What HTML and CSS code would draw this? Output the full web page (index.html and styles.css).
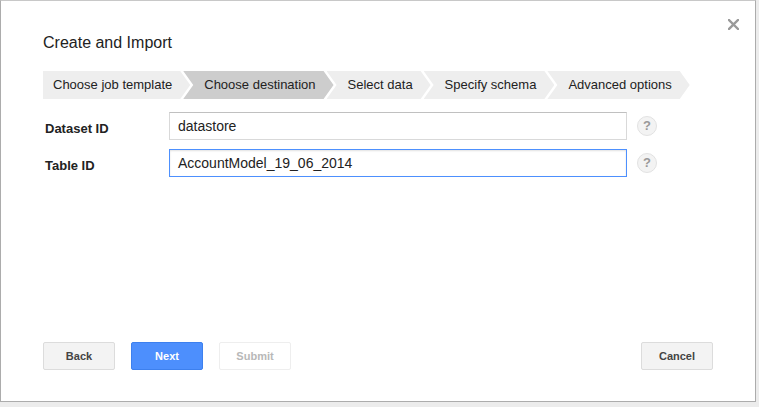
FILE: index.html
```html
<!DOCTYPE html>
<html lang="en">
<head>
<meta charset="utf-8">
<title>Create and Import</title>
<link rel="stylesheet" href="styles.css">
</head>
<body>
<div class="dialog">
  <button class="close" aria-label="Close">
    <svg width="11" height="11" viewBox="0 0 11 11"><path d="M1 1 L10 10 M10 1 L1 10" stroke="#9a9a9a" stroke-width="2.4" stroke-linecap="square" fill="none"/></svg>
  </button>
  <h1 class="title">Create and Import</h1>
  <div class="steps">
    <div class="step first">Choose job template</div>
    <div class="step active">Choose destination</div>
    <div class="step">Select data</div>
    <div class="step">Specify schema</div>
    <div class="step">Advanced options</div>
  </div>
  <div class="form">
    <div class="row">
      <div class="label">Dataset ID</div>
      <div class="input">datastore</div>
      <div class="help">?</div>
    </div>
    <div class="row">
      <div class="label">Table ID</div>
      <div class="input focused">AccountModel_19_06_2014</div>
      <div class="help">?</div>
    </div>
  </div>
  <div class="buttons">
    <button class="btn">Back</button>
    <button class="btn primary">Next</button>
    <button class="btn disabled">Submit</button>
    <button class="btn cancel">Cancel</button>
  </div>
</div>
</body>
</html>
```
FILE: styles.css
```css
html, body {
  margin: 0;
  padding: 0;
}
body {
  width: 759px;
  height: 407px;
  background: #ececec;
  font-family: "Liberation Sans", Arial, Helvetica, sans-serif;
  color: #222;
  overflow: hidden;
}
.dialog {
  position: relative;
  box-sizing: border-box;
  width: 756px;
  height: 402px;
  background: #fff;
  border: 1px solid #acacac;
  border-top-color: #c8c8c8;
  padding: 32px 42px 31px 42px;
  display: flex;
  flex-direction: column;
}
.close {
  position: absolute;
  top: 17px;
  left: 726px;
  width: 13px;
  height: 13px;
  padding: 1px;
  border: 0;
  background: transparent;
  display: flex;
  align-items: center;
  justify-content: center;
}
.title {
  margin: 0;
  font-size: 16px;
  line-height: 19px;
  font-weight: normal;
  color: #222;
}
.steps {
  margin-top: 19px;
  display: flex;
  height: 28px;
}
.step {
  height: 28px;
  line-height: 28px;
  font-size: 13px;
  color: #222;
  background: #eeeeee;
  padding: 0 18px 0 21px;
  margin-left: -7px;
  white-space: nowrap;
  clip-path: polygon(0 0, calc(100% - 10px) 0, 100% 50%, calc(100% - 10px) 100%, 0 100%, 10px 50%);
}
.step.first {
  margin-left: 0;
  padding-left: 10px;
  clip-path: polygon(0 0, calc(100% - 10px) 0, 100% 50%, calc(100% - 10px) 100%, 0 100%);
}
.step.active {
  background: #cdcdcd;
}
.form {
  margin-top: 13px;
  display: flex;
  flex-direction: column;
  gap: 9px;
}
.row {
  display: flex;
  align-items: center;
  height: 28px;
}
.label {
  width: 124px;
  padding-left: 2px;
  padding-top: 4px;
  font-size: 13px;
  font-weight: bold;
  color: #222;
}
.input {
  box-sizing: border-box;
  width: 458px;
  height: 28px;
  line-height: 26px;
  padding-left: 8px;
  font-size: 14px;
  color: #222;
  border: 1px solid #d9d9d9;
  border-top-color: #c0c0c0;
  background: #fff;
}
.input.focused {
  border-color: #4d90fe;
  box-shadow: inset 0 1px 2px rgba(0, 0, 0, 0.12);
}
.help {
  margin-left: 10px;
  box-sizing: border-box;
  width: 20px;
  height: 20px;
  border-radius: 50%;
  border: 1px solid #e2e2e2;
  background: #f3f3f3;
  color: #999;
  font-size: 13px;
  font-weight: bold;
  line-height: 18px;
  text-align: center;
}
.buttons {
  margin-top: auto;
  display: flex;
  gap: 16px;
}
.btn {
  box-sizing: border-box;
  width: 72px;
  height: 28px;
  font-family: "Liberation Sans", Arial, Helvetica, sans-serif;
  font-size: 11px;
  font-weight: bold;
  color: #444;
  background: #f3f3f3;
  border: 1px solid #dcdcdc;
  border-radius: 2px;
  padding: 0;
}
.btn.primary {
  background: #4d8ffd;
  border-color: #3d80ee;
  color: #fff;
}
.btn.disabled {
  background: #fff;
  border-color: #eeeeee;
  color: #b8b8b8;
}
.btn.cancel {
  margin-left: auto;
}
```
